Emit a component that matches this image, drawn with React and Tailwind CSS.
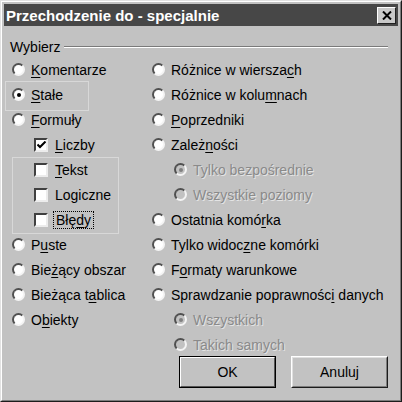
import React from 'react';

// Win2000-style "Go To Special" dialog (Polish Excel)
const Acc = ({ label }) => {
  // label: [before, accelerator, after]
  const [a, b, c] = label;
  return (
    <span className="whitespace-nowrap">
      {a}
      {b && <span className="underline decoration-1 underline-offset-[2px]">{b}</span>}
      {c}
    </span>
  );
};

const Radio = ({ checked, disabled }) => (
  <span
    className={`relative w-[13px] h-[13px] shrink-0 rounded-full border-2 border-t-[#505050] border-l-[#505050] border-b-[#f4f4f4] border-r-[#f4f4f4] flex items-center justify-center ${
      disabled ? 'bg-[#c2c2c2]' : 'bg-white'
    }`}
  >
    {checked && (
      <span className={`w-[4px] h-[4px] rounded-full ${disabled ? 'bg-[#808080]' : 'bg-black'}`} />
    )}
  </span>
);

const Check = ({ checked }) => (
  <span className="w-[14px] h-[14px] shrink-0 border-2 border-t-[#404040] border-l-[#404040] border-b-[#ececec] border-r-[#ececec] bg-white flex items-center justify-center">
    {checked && (
      <svg width="9" height="8" viewBox="0 0 9 8">
        <path d="M0.5 3.5 L3 6 L8.5 0.5" stroke="#000" strokeWidth="2" fill="none" />
      </svg>
    )}
  </span>
);

const Row = ({ kind = 'radio', label, checked, disabled, indent = 0, focus }) => (
  <div className="h-[25px] flex items-center" style={{ paddingLeft: indent }}>
    {kind === 'radio' ? <Radio checked={checked} disabled={disabled} /> : <Check checked={checked} />}
    <span
      className={`ml-[6px] ${kind === 'check' ? 'ml-[7px]' : ''} ${
        disabled ? 'text-[#8a8a8a] [text-shadow:1px_1px_0_#e4e4e4]' : 'text-black'
      } ${focus ? 'outline outline-1 outline-dotted outline-black outline-offset-[1px] px-[1px]' : ''}`}
    >
      <Acc label={label} />
    </span>
  </div>
);

const leftItems = [
  { label: ['', 'K', 'omentarze'] },
  { label: ['', 'S', 'tałe'], checked: true },
  { label: ['', 'F', 'ormuły'] },
  { kind: 'check', label: ['', 'L', 'iczby'], checked: true, indent: 22 },
  { kind: 'check', label: ['', 'T', 'ekst'], indent: 22 },
  { kind: 'check', label: ['Logiczne', '', ''], indent: 22 },
  { kind: 'check', label: ['Błę', 'd', 'y'], indent: 22, focus: true },
  { label: ['P', 'u', 'ste'] },
  { label: ['Bie', 'ż', 'ący obszar'] },
  { label: ['Bieżąca t', 'a', 'blica'] },
  { label: ['O', 'b', 'iekty'] },
];

const rightItems = [
  { label: ['Różnice w wiersza', 'c', 'h'] },
  { label: ['Różnice w kolu', 'm', 'nach'] },
  { label: ['', 'P', 'oprzedniki'] },
  { label: ['Zależ', 'n', 'ości'] },
  { label: ['Tylko bezpośrednie', '', ''], checked: true, disabled: true, indent: 22 },
  { label: ['Wszystkie poziomy', '', ''], disabled: true, indent: 22 },
  { label: ['Ostatnia komó', 'r', 'ka'] },
  { label: ['Tylko widoc', 'z', 'ne komórki'] },
  { label: ['F', 'o', 'rmaty warunkowe'] },
  { label: ['Sprawdzanie poprawnośc', 'i', ' danych'] },
  { label: ['Wszystkich', '', ''], checked: true, disabled: true, indent: 22 },
  { label: ['Takich samych', '', ''], disabled: true, indent: 22 },
];

export default function App() {
  return (
    <div className="relative w-[402px] h-[402px] bg-[#c2c2c2] border border-t-[#e2e2e2] border-l-[#e2e2e2] border-b-[#1c1c1c] border-r-[#1c1c1c] font-['Liberation_Sans',Arial,sans-serif] text-[14px] leading-none select-none overflow-hidden">
      <div className="h-full border border-t-white border-l-white border-b-[#7c7c7c] border-r-[#7c7c7c] p-[2px] flex flex-col">
        {/* Title bar */}
        <div className="h-[22px] bg-[#474747] flex items-center justify-between pl-[2px] pr-[2px]">
          <span className="text-white font-bold text-[15px]">Przechodzenie do - specjalnie</span>
          <span className="w-[19px] h-[17px] bg-[#c8c8c8] border border-t-white border-l-white border-b-[#202020] border-r-[#202020] flex items-center justify-center">
            <svg width="10" height="9" viewBox="0 0 10 9">
              <path d="M1 0.5 L9 8.5 M9 0.5 L1 8.5" stroke="#000" strokeWidth="2" />
            </svg>
          </span>
        </div>

        {/* Body */}
        <div className="px-[6px] pt-[11px]">
          <div className="h-[20px] flex items-center">
            <span>Wybierz</span>
            <span className="ml-[4px] mr-[4px] flex-1 h-[2px] border-t border-t-[#7a7a7a] border-b border-b-white" />
          </div>

          <div className="flex ml-[2px]">
            <div className="w-[140px]">
              {leftItems.map((it, i) => (
                <Row key={i} {...it} />
              ))}
            </div>
            <div className="flex-1">
              {rightItems.map((it, i) => (
                <Row key={i} {...it} />
              ))}
              <div className="flex gap-[15px] ml-[27px] mt-[-1px]">
                <button className="w-[97px] h-[32px] border border-black bg-[#c2c2c2] flex p-0">
                  <span className="flex-1 border border-t-white border-l-white border-b-[#555] border-r-[#555] flex items-center justify-center text-[14px]">
                    OK
                  </span>
                </button>
                <button className="w-[97px] h-[32px] bg-[#c2c2c2] border border-t-white border-l-white border-b-[#1c1c1c] border-r-[#1c1c1c] flex p-0">
                  <span className="flex-1 border border-t-[#e0e0e0] border-l-[#e0e0e0] border-b-[#7c7c7c] border-r-[#7c7c7c] flex items-center justify-center text-[14px]">
                    Anuluj
                  </span>
                </button>
              </div>
            </div>
          </div>
        </div>
      </div>

      {/* light highlight frames drawn over the dialog */}
      <div className="absolute left-[4px] top-[80px] w-[84px] h-[30px] border border-[#d8d8d8] pointer-events-none" />
      <div className="absolute left-[11px] top-[156px] w-[107px] h-[77px] border border-[#d8d8d8] pointer-events-none" />
    </div>
  );
}
